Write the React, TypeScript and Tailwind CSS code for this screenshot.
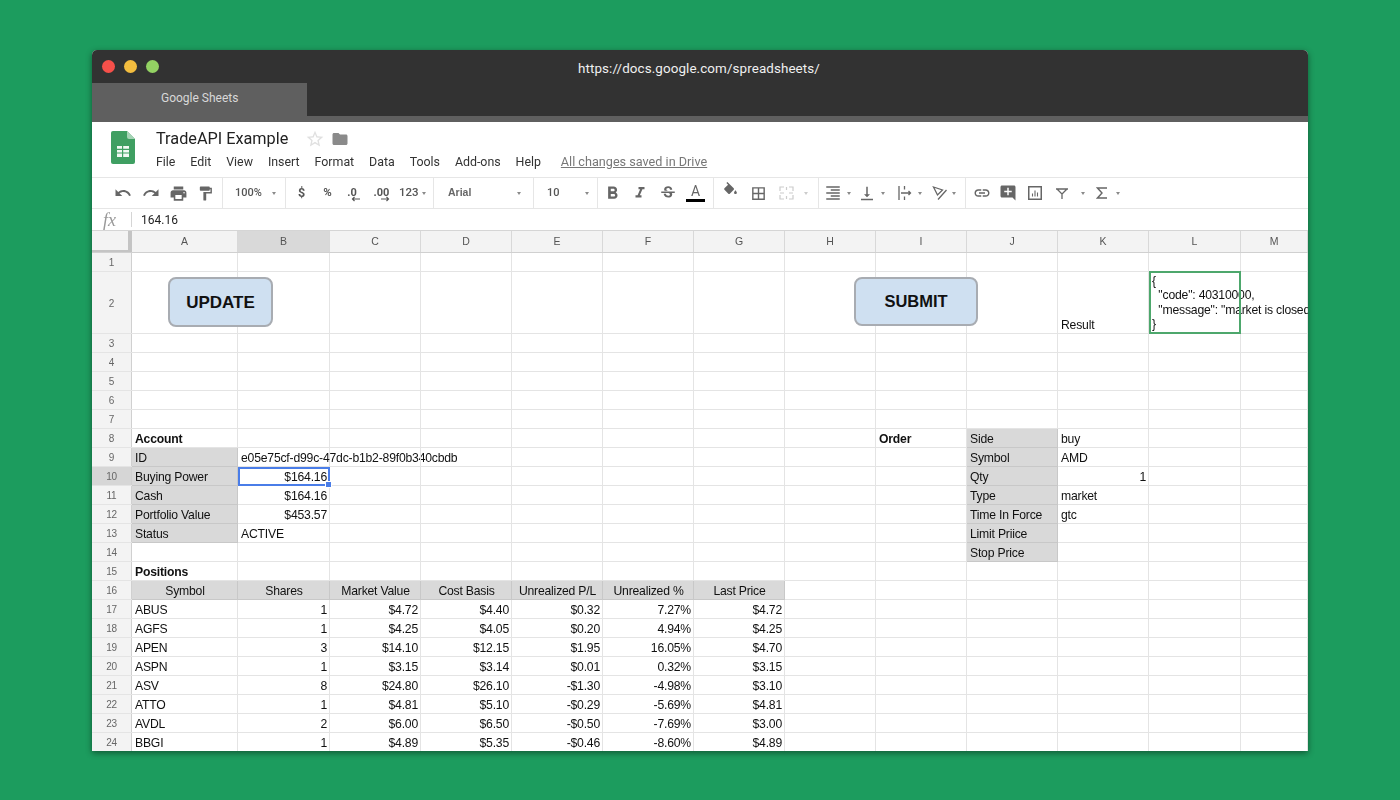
import React from "react";
import {
  MdUndo, MdRedo, MdPrint, MdFormatPaint, MdFormatBold, MdFormatItalic, MdStrikethroughS,
  MdBorderAll, MdFormatAlignRight, MdVerticalAlignBottom, MdInsertLink, MdAddComment, MdFolder, MdStarBorder,
} from "react-icons/md";

const COLS = ["A", "B", "C", "D", "E", "F", "G", "H", "I", "J", "K", "L", "M"];
const WIDTHS = [106, 92, 91, 91, 91, 91, 91, 91, 91, 91, 91, 92, 67];

type Cell = { t?: string; r?: boolean; c?: boolean; b?: boolean; g?: boolean };
const G = (t: string): Cell => ({ t, g: true });
const GC = (t: string): Cell => ({ t, g: true, c: true });
const R = (t: string): Cell => ({ t, r: true });
const L = (t: string): Cell => ({ t });

const rows: Record<number, Record<number, Cell>> = {
  2: { 10: { t: "Result" } },
  8: { 0: { t: "Account", b: true }, 8: { t: "Order", b: true }, 9: G("Side"), 10: L("buy") },
  9: { 0: G("ID"), 1: L("e05e75cf-d99c-47dc-b1b2-89f0b340cbdb"), 9: G("Symbol"), 10: L("AMD") },
  10: { 0: G("Buying Power"), 1: R("$164.16"), 9: G("Qty"), 10: R("1") },
  11: { 0: G("Cash"), 1: R("$164.16"), 9: G("Type"), 10: L("market") },
  12: { 0: G("Portfolio Value"), 1: R("$453.57"), 9: G("Time In Force"), 10: L("gtc") },
  13: { 0: G("Status"), 1: L("ACTIVE"), 9: G("Limit Priice") },
  14: { 9: G("Stop Price") },
  15: { 0: { t: "Positions", b: true } },
  16: Object.fromEntries(["Symbol", "Shares", "Market Value", "Cost Basis", "Unrealized P/L", "Unrealized %", "Last Price"].map((t, i) => [i, GC(t)])),
};

const positions = [
  ["ABUS", "1", "$4.72", "$4.40", "$0.32", "7.27%", "$4.72"],
  ["AGFS", "1", "$4.25", "$4.05", "$0.20", "4.94%", "$4.25"],
  ["APEN", "3", "$14.10", "$12.15", "$1.95", "16.05%", "$4.70"],
  ["ASPN", "1", "$3.15", "$3.14", "$0.01", "0.32%", "$3.15"],
  ["ASV", "8", "$24.80", "$26.10", "-$1.30", "-4.98%", "$3.10"],
  ["ATTO", "1", "$4.81", "$5.10", "-$0.29", "-5.69%", "$4.81"],
  ["AVDL", "2", "$6.00", "$6.50", "-$0.50", "-7.69%", "$3.00"],
  ["BBGI", "1", "$4.89", "$5.35", "-$0.46", "-8.60%", "$4.89"],
];
positions.forEach((p, i) => {
  rows[17 + i] = Object.fromEntries(p.map((t, j) => [j, j === 0 ? L(t) : R(t)]));
});

const Caret = ({ className = "" }: { className?: string }) => (
  <span className={`h-0 w-0 shrink-0 border-x-[2.5px] border-t-[3px] border-x-transparent border-t-[#8a8a8a] ${className}`} />
);

const Sep = () => <span className="h-[30px] w-px shrink-0 bg-[#e6e6e6]" />;

function Tool({ className = "", children }: { className?: string; children: React.ReactNode }) {
  return <span className={`flex h-[30px] shrink-0 items-center justify-center text-[#666] ${className}`}>{children}</span>;
}

function SheetsLogo() {
  return (
    <svg width="24" height="33" viewBox="0 0 24 33">
      <path d="M2 0h14l8 8v23a2 2 0 0 1-2 2H2a2 2 0 0 1-2-2V2a2 2 0 0 1 2-2z" fill="#3f9f62" />
      <path d="M16 0l8 8h-6a2 2 0 0 1-2-2z" fill="#a6d4b6" />
      <path d="M6 15h12v11H6z" fill="#f1f8f3" />
      <path d="M6 18.4h12M6 22h12M11.6 15v11" stroke="#3f9f62" strokeWidth="1.2" />
    </svg>
  );
}

function Toolbar() {
  return (
    <div className="flex h-[32px] items-center border-y border-[#e6e6e6] pl-[19px] font-['Roboto',sans-serif] text-[#555]">
      <Tool className="w-[24px]"><MdUndo size={18} /></Tool>
      <Tool className="w-[32px]"><MdRedo size={18} /></Tool>
      <Tool className="w-[22px]"><MdPrint size={19} /></Tool>
      <Tool className="w-[33px]"><MdFormatPaint size={17} /></Tool>
      <Sep />
      <span className="flex w-[62px] shrink-0 items-center pl-[12px] text-[11px] font-medium">100%<Caret className="ml-[10px]" /></span>
      <Sep />
      <Tool className="w-[31px]"><span className="text-[12.5px] font-bold text-[#555]">$</span></Tool>
      <Tool className="w-[21px]"><span className="text-[11.5px] font-bold text-[#555]">%</span></Tool>
      <Tool className="w-[28px]">
        <span className="relative pb-[1px] text-[11px] font-bold leading-none text-[#555]">
          .0
          <svg className="absolute left-[4px] top-[9px]" width="9" height="6" viewBox="0 0 9 6" fill="none" stroke="#555" strokeWidth="1.2">
            <path d="M9 3H1.5M3.5 1L1.5 3l2 2" />
          </svg>
        </span>
      </Tool>
      <Tool className="w-[31px]">
        <span className="relative pb-[1px] text-[11px] font-bold leading-none text-[#555]">
          .00
          <svg className="absolute left-[7px] top-[9px]" width="9" height="6" viewBox="0 0 9 6" fill="none" stroke="#555" strokeWidth="1.2">
            <path d="M0 3h7.5M5.5 1l2 2-2 2" />
          </svg>
        </span>
      </Tool>
      <span className="flex w-[36px] shrink-0 items-center pl-[2px] text-[11.5px] font-medium">123<Caret className="ml-[3px]" /></span>
      <Sep />
      <span className="flex w-[99px] shrink-0 items-center pl-[14px] font-['Liberation_Sans',sans-serif] text-[10.5px] font-bold text-[#666]">Arial<Caret className="ml-[46px]" /></span>
      <Sep />
      <span className="flex w-[63px] shrink-0 items-center pl-[13px] text-[11px] font-medium">10<Caret className="ml-[25px]" /></span>
      <Sep />
      <Tool className="w-[29px]"><MdFormatBold size={21} /></Tool>
      <Tool className="w-[25px]"><MdFormatItalic size={18} /></Tool>
      <Tool className="w-[31px]"><MdStrikethroughS size={18} /></Tool>
      <Tool className="w-[25px]">
        <span className="flex flex-col items-center">
          <span className="text-[14px] leading-[13px] text-[#666]">A</span>
          <span className="mt-[1px] h-[3px] w-[19px] bg-black" />
        </span>
      </Tool>
      <span className="w-[5px] shrink-0" />
      <Sep />
      <Tool className="w-[33px]">
        <svg className="mb-[5px]" width="17" height="17" viewBox="0 0 24 24" fill="#666">
          <path d="M16.56 8.94L7.62 0 6.21 1.41l2.38 2.38-5.15 5.15c-.59.59-.59 1.54 0 2.12l5.5 5.5c.29.29.68.44 1.06.44s.77-.15 1.06-.44l5.5-5.5c.59-.58.59-1.53 0-2.11zM19 11.5s-2 2.17-2 3.5c0 1.1.9 2 2 2s2-.9 2-2c0-1.33-2-3.5-2-3.5z" />
        </svg>
      </Tool>
      <Tool className="w-[23px]"><MdBorderAll size={17} /></Tool>
      <Tool className="w-[33px]">
        <svg width="15" height="14" viewBox="0 0 15 14" fill="none" stroke="#ccc" strokeWidth="1.2">
          <path d="M5 1H1v4M10 1h4v4M5 13H1V9M10 13h4V9M1 7h4M10 7h4M7.500 1v3M7.500 10v3" />
        </svg>
      </Tool>
      <span className="flex w-[15px] shrink-0 pl-[1px]"><span className="h-0 w-0 border-x-[2.5px] border-t-[3px] border-x-transparent border-t-[#ccc]" /></span>
      <Sep />
      <Tool className="ml-[5px] w-[18px]"><MdFormatAlignRight size={20} /></Tool>
      <Caret className="ml-[4.5px]" />
      <Tool className="ml-[7.5px] w-[18px]"><MdVerticalAlignBottom size={19} /></Tool>
      <Caret className="ml-[4.5px]" />
      <Tool className="ml-[11.5px] w-[18px]">
        <svg width="14" height="14" viewBox="0 0 14 14" fill="none" stroke="#666" strokeWidth="1.3">
          <path d="M1 0v14M6.500 0v3.500M6.500 10.500V14M3 7h9.500M10.500 5l2 2-2 2" />
        </svg>
      </Tool>
      <Caret className="ml-[3.5px]" />
      <Tool className="ml-[8.5px] w-[18px]">
        <svg width="15" height="14" viewBox="0 0 15 14" fill="none" stroke="#666" strokeWidth="1.3">
          <path d="M1.500 1l9 3-5 5zM14.500 4L6 13.500" />
        </svg>
      </Tool>
      <Caret className="ml-[3.5px]" />
      <span className="w-[9.5px] shrink-0" />
      <Sep />
      <Tool className="ml-[7px] w-[18px]"><MdInsertLink size={20} /></Tool>
      <Tool className="ml-[8px] w-[18px]"><MdAddComment size={18} /></Tool>
      <Tool className="ml-[9px] w-[18px]">
        <svg width="14" height="14" viewBox="0 0 14 14" fill="none" stroke="#666">
          <rect x="0.750" y="0.750" width="12.500" height="12.500" strokeWidth="1.500" />
          <path d="M4.500 10.500V7.500M7 10.500V4.500M9.500 10.500V6.500" strokeWidth="1.100" />
        </svg>
      </Tool>
      <Tool className="ml-[9px] w-[18px]">
        <svg width="12" height="11" viewBox="0 0 12 11" fill="none" stroke="#666" strokeWidth="1.300">
          <path d="M0 1h12M1.500 1.500L6 6v5M10.500 1.500L6 6" />
        </svg>
      </Tool>
      <Caret className="ml-[9.5px]" />
      <Tool className="ml-[8px] w-[18px]">
        <svg width="11" height="12" viewBox="0 0 11 12" fill="none" stroke="#666" strokeWidth="1.400">
          <path d="M11 1H1.500l4.500 5-4.500 5H11" />
        </svg>
      </Tool>
      <Caret className="ml-[5px]" />
    </div>
  );
}

function SpreadsheetRow({ n }: { n: number }) {
  const cells = rows[n] ?? {};
  const tall = n === 2;
  return (
    <div className={`flex border-b border-[#e4e4e4] ${tall ? "h-[62px]" : "h-[19px]"}`}>
      <div className={`flex w-[40px] shrink-0 items-center justify-center border-r border-[#d0d0d0] pt-[1px] text-[10px] text-[#666] ${n === 10 ? "bg-[#d6d6d6]" : "bg-[#f3f3f3]"}`}>
        {n}
      </div>
      {WIDTHS.map((w, i) => {
        const cell = cells[i];
        return (
          <div
            key={i}
            style={{ width: w }}
            className={`flex shrink-0 whitespace-nowrap border-r pl-[3px] pr-[2px] ${tall ? "items-end leading-[16px]" : "items-center pt-[2px] leading-[14px]"} ${cell?.g ? "border-[#c8c8c8] bg-[#d9d9d9] shadow-[0_1px_0_#c8c8c8]" : "border-[#e4e4e4]"} ${cell?.r ? "justify-end" : ""} ${cell?.c ? "justify-center" : ""} ${cell?.b ? "font-bold" : ""}`}
          >
            {cell?.t}
          </div>
        );
      })}
    </div>
  );
}

export default function App() {
  const rowNums = Array.from({ length: 24 }, (_, i) => i + 1);
  return (
    <div className="flex h-[800px] w-[1400px] overflow-hidden bg-[#1c9c5e] pl-[92px] pt-[50px]">
      <div className="h-[701px] w-[1216px] overflow-hidden rounded-t-[5px] bg-white shadow-[0_2px_6px_rgba(0,0,0,0.45)] blur-[0.4px]">
        <div className="h-[72px] bg-[#323232] font-['Roboto',sans-serif]">
          <div className="flex h-[33px] items-center pl-[10px]">
            <span className="h-[13px] w-[13px] rounded-full bg-[#f6504a]" />
            <span className="ml-[9px] h-[13px] w-[13px] rounded-full bg-[#f3bd3f]" />
            <span className="ml-[9px] h-[13px] w-[13px] rounded-full bg-[#93d263]" />
            <span className="ml-[419px] pt-[5px] text-[13.4px] tracking-[0.1px] text-[#f0f0f0]">https://docs.google.com/spreadsheets/</span>
          </div>
          <div className="flex h-[33px] w-[215px] items-center bg-[#5f5f5f] pb-[3px] pl-[69px] text-[12px] text-[#d8d8d8]">Google Sheets</div>
          <div className="h-[6px] bg-[#5f5f5f]" />
        </div>

        <div className="flex h-[55px] font-['Roboto',sans-serif]">
          <div className="pl-[19px] pt-[9px]"><SheetsLogo /></div>
          <div className="pl-[21px] pt-[5px]">
            <div className="flex h-[24px] items-center">
              <span className="text-[16.25px] text-[#222]">TradeAPI Example</span>
              <MdStarBorder size={20} className="ml-[16.5px] text-[#e0e0e0]" />
              <MdFolder size={18} className="ml-[6px] text-[#8a8a8a]" />
            </div>
            <div className="mt-[2px] flex items-center gap-[14.9px] text-[12.4px] text-[#333]">
              {["File", "Edit", "View", "Insert", "Format", "Data", "Tools", "Add-ons", "Help"].map((m) => (
                <span key={m}>{m}</span>
              ))}
              <span className="ml-[5px] text-[12.65px] text-[#777] underline">All changes saved in Drive</span>
            </div>
          </div>
        </div>

        <Toolbar />

        <div className="flex h-[22px] items-center border-b border-[#d5d5d5] font-['Roboto',sans-serif]">
          <span className="w-[30px] pl-[11px] font-['Liberation_Serif',serif] text-[18px] italic leading-none text-[#999]">fx</span>
          <span className="ml-[9px] h-[15px] w-px bg-[#d5d5d5]" />
          <span className="ml-[9px] text-[12px] text-[#222]">164.16</span>
        </div>

        <div className="flex h-[22px] border-b border-[#d0d0d0] bg-[#f3f3f3] text-[10.5px] text-[#555]">
          <div className="w-[40px] shrink-0 border-b-[2px] border-r-[4px] border-[#c4c4c4]" />
          {COLS.map((c, i) => (
            <div key={c} style={{ width: WIDTHS[i] }} className={`flex shrink-0 items-center justify-center border-r border-[#d8d8d8] font-['Liberation_Sans',sans-serif] ${c === "B" ? "bg-[#d9d9d9]" : ""}`}>
              {c}
            </div>
          ))}
        </div>

        <div className="relative font-['Liberation_Sans',sans-serif] text-[12.2px] tracking-[-0.2px] text-[#111]">
          {rowNums.map((n) => <SpreadsheetRow key={n} n={n} />)}

          <button className="absolute left-[76px] top-[24px] flex h-[50px] w-[105px] items-center justify-center rounded-[8px] border-2 border-[#a8acb2] bg-[#cfe0f1] pt-[1px] text-[17px] font-bold tracking-normal text-[#111]">UPDATE</button>
          <button className="absolute left-[762px] top-[24px] flex h-[49px] w-[124px] items-center justify-center rounded-[8px] border-2 border-[#a8acb2] bg-[#cfe0f1] pb-[1px] text-[16.5px] font-bold tracking-normal text-[#111]">SUBMIT</button>

          <div className="absolute left-[1060px] top-[21px] w-[156px] overflow-hidden whitespace-pre leading-[14.4px]">{"{\n  \"code\": 40310000,\n  \"message\": \"market is closed\"\n}"}</div>
          <div className="absolute left-[1057px] top-[18px] h-[63px] w-[92px] border-2 border-[#4da76c]" />

          <div className="absolute left-[146px] top-[214px] h-[19px] w-[92px] border-2 border-[#4a7de8]" />
          <div className="absolute left-[233px] top-[228px] h-[7px] w-[7px] border border-white bg-[#4a7de8]" />
        </div>
      </div>
    </div>
  );
}
